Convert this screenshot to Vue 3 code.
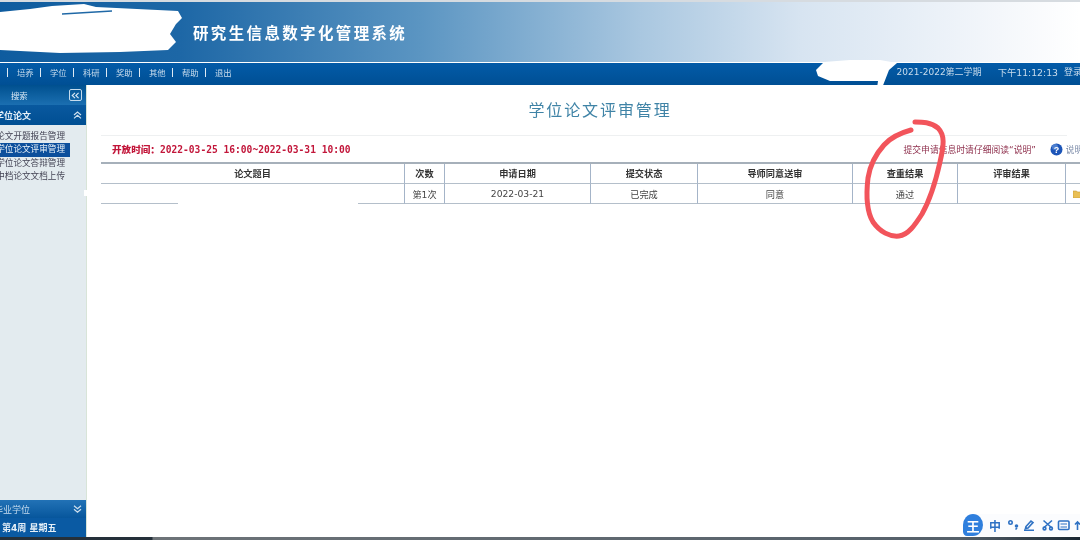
<script setup>
const navItems = ['培养', '学位', '科研', '奖助', '其他', '帮助', '退出'];
const menuItems = [
  { label: '论文开题报告管理', active: false },
  { label: '学位论文评审管理', active: true },
  { label: '学位论文答辩管理', active: false },
  { label: '中档论文文档上传', active: false }
];
const headers = ['论文题目', '次数', '申请日期', '提交状态', '导师同意送审', '查重结果', '评审结果', ''];
const cells = ['', '第1次', '2022-03-21', '已完成', '同意', '通过', ''];
</script>

<template>
  <div class="page">
    <div class="top-line"></div>
    <header class="banner">
      <span class="system-name">研究生信息数字化管理系统</span>
    </header>
    <nav class="nav">
      <div class="nav-links">
        <template v-for="item in navItems" :key="item">
          <i class="nav-sep"></i>
          <a class="nav-link">{{ item }}</a>
        </template>
      </div>
      <div class="nav-info">
        <span class="term">2021-2022第二学期</span>
        <span class="clock">下午11:12:13</span>
        <span class="login">登录用户</span>
      </div>
    </nav>

    <div class="body">
      <aside class="sidebar">
        <div class="search">
          <span class="search-label">搜索</span>
          <span class="collapse-btn">
            <svg width="9" height="7" viewBox="0 0 9 7" fill="none" stroke="#dbe9f5" stroke-width="1.1">
              <path d="M4 .8 1.2 3.5 4 6.2M7.6 .8 4.8 3.5 7.6 6.2" />
            </svg>
          </span>
        </div>
        <div class="section-head">
          <span class="section-title">学位论文</span>
          <svg width="9" height="8" viewBox="0 0 9 8" fill="none" stroke="#cfe0ee" stroke-width="1.2">
            <path d="M1 4 4.5 1 8 4M1 7.4 4.5 4.4 8 7.4" />
          </svg>
        </div>
        <ul class="menu">
          <li v-for="item in menuItems" :key="item.label" :class="['menu-item', { active: item.active }]">
            <span>{{ item.label }}</span>
          </li>
        </ul>
        <div class="section-head lower">
          <span class="section-title light">毕业学位</span>
          <svg width="9" height="8" viewBox="0 0 9 8" fill="none" stroke="#cfe0ee" stroke-width="1.2">
            <path d="M1 .8 4.5 3.8 8 .8M1 4.2 4.5 7.2 8 4.2" />
          </svg>
        </div>
        <div class="week">第4周 星期五</div>
      </aside>

      <main class="main">
        <h1 class="title">学位论文评审管理</h1>
        <div class="toolbar">
          <span class="open-time"><b>开放时间：</b>2022-03-25 16:00~2022-03-31 10:00</span>
          <span class="notice">提交申请信息时请仔细阅读“说明”</span>
          <svg class="help" width="13" height="13" viewBox="0 0 13 13">
            <circle cx="6.5" cy="6.5" r="6" fill="#1c55b8" />
            <circle cx="5" cy="4" r="3" fill="#6d9be0" opacity=".6" />
            <text x="6.5" y="9.8" text-anchor="middle" font-size="9" font-weight="700" font-family="Liberation Sans, sans-serif" fill="#fff">?</text>
          </svg>
          <span class="help-text">说明</span>
        </div>
        <div class="table">
          <div v-for="(h, i) in headers" :key="'h' + i" class="cell head">{{ h }}</div>
          <div v-for="(c, i) in cells" :key="'c' + i" class="cell">{{ c }}</div>
          <div class="cell">
            <svg class="folder" width="9" height="8" viewBox="0 0 9 8">
              <path d="M0 1h3.5l1 1H9v6H0z" fill="#e9bf55" stroke="#c79a35" stroke-width=".6" />
            </svg>
          </div>
        </div>
      </main>
    </div>
    <div class="bottom-line"></div>

    <!-- hand-drawn marks painted over the screenshot -->
    <svg class="marks" width="1080" height="540" viewBox="0 0 1080 540" fill="none">
      <path fill="#fff" d="M0 12 30 9 52 6 84 4 96 7 178 11 182 18 176 24 170 34 176 42 168 50 120 52 60 53 0 50z" />
      <path stroke="#1f68a6" stroke-width="1.5" d="M62 14 112 11" />
      <path fill="#fff" d="M816 70 824 62 850 60 880 60 897 63 889 70 882 88 877 88 878 81 830 81 818 76z" />
      <path fill="#fff" d="M102 184 207 184 207 186 178 186 178 197 358 197 358 206 178 206 178 201 102 201z" />
      <path fill="#fff" d="M84 190h5v6h-5z" />
      <path stroke="#f2545b" stroke-width="5" stroke-linecap="round" stroke-linejoin="round"
        d="M911 130C900 133 891 137 884 145 875 155 870 165 868 178 866 195 867 212 873 222 880 232 890 237 899 236 908 235 915 225 922 214 931 198 936 180 940 162 944 145 945 135 938 128 931 122 922 122 915 122" />
    </svg>

    <div class="ime">
      <span class="ime-logo">王</span>
      <span class="ime-cn">中</span>
      <svg width="74" height="12" viewBox="0 0 74 12" fill="none" stroke="#2f72c4" stroke-width="1.6">
        <circle cx="3.500" cy="3.500" r="1.700" />
        <circle cx="9.500" cy="7" r="1" fill="#2f72c4" />
        <path d="M8.500 10.500 10 9" />
        <path d="M19 7.500 24 2 26 3.500 21 9 18.500 9.500zM17 11.400H27" />
        <path d="M36.500 1.500 45 9M45 1.500 36.500 9" />
        <circle cx="37.500" cy="9.500" r="1.400" />
        <circle cx="44" cy="9.500" r="1.400" />
        <rect x="51.500" y="2" width="10.500" height="8.500" rx="1" />
        <path d="M53.500 5h6.500M53.500 8h6.500" stroke-width="1" />
        <path d="M70.500 11V3M68 5.500 70.500 3 73 5.500" />
      </svg>
    </div>
  </div>
</template>

<style scoped>
.page {
  position: relative;
  display: flex;
  flex-direction: column;
  width: 1080px;
  height: 540px;
  overflow: hidden;
  background: #fff;
  font-family: "DejaVu Sans", "Noto Sans CJK SC", sans-serif;
  font-size: 9px;
  color: #333;
  filter: blur(0.35px);
}

.top-line {
  height: 2px;
  background: #d6dbe0;
}

.banner {
  display: flex;
  align-items: center;
  height: 60px;
  padding-left: 193px;
  box-sizing: border-box;
  background: linear-gradient(90deg, #0f5c9f 0, #1d67a6 180px, #5b95c2 420px, #a9c7e0 640px, #d7e4f1 800px, #f4f7fb 1000px, #fff 1080px);
}

.system-name {
  font-family: "Noto Sans CJK SC", serif;
  font-size: 15.5px;
  font-weight: 700;
  letter-spacing: 2.35px;
  color: #fff;
}

.nav {
  display: flex;
  justify-content: space-between;
  align-items: center;
  height: 22px;
  padding-bottom: 4px;
  box-sizing: border-box;
  margin-top: 1px;
  background: linear-gradient(180deg, #035ba8, #004f94);
  color: #c9dcec;
}

.nav-links {
  display: flex;
  align-items: center;
  padding-left: 7px;
}

.nav-sep {
  width: 1px;
  height: 9px;
  margin-right: 9px;
  background: #dfeaf3;
}

.nav-link {
  width: 23px;
  font-size: 8.4px;
}

.nav-info {
  display: flex;
  gap: 16px;
  margin-right: -20px;
  white-space: nowrap;
}

.term {
  font-size: 9px;
}

.clock {
  font-size: 9.3px;
}

.login {
  margin-left: -10px;
  font-size: 9px;
}

.body {
  display: flex;
  flex: 1;
  min-height: 0;
}

.sidebar {
  display: flex;
  flex-direction: column;
  flex: none;
  width: 86px;
  border-right: 1px solid #d8e4d8;
  background: #e3ebef;
}

.search {
  display: flex;
  align-items: center;
  height: 20px;
  padding: 0 4px 0 11px;
  background: linear-gradient(180deg, #00508f, #1b6fb1);
  color: #dbe9f5;
  font-size: 8.4px;
}

.search-label {
  flex: 1;
}

.collapse-btn {
  display: flex;
  align-items: center;
  justify-content: center;
  width: 11px;
  height: 10px;
  border: 1px solid #c6dcee;
  border-radius: 2px;
}

.section-head {
  display: flex;
  align-items: center;
  justify-content: flex-end;
  height: 20px;
  padding-right: 4px;
  background: linear-gradient(180deg, #09599f, #004f93);
}

.section-head.lower {
  height: 18px;
  background: linear-gradient(180deg, #2272b6, #07569c);
}

.section-title {
  display: block;
  margin-right: auto;
  margin-left: -5px;
  font-size: 9px;
  font-weight: 700;
  color: #e6f0f8;
  white-space: nowrap;
}

.section-title.light {
  font-weight: 400;
  color: #c6dcee;
  margin-left: -6px;
}

.menu {
  flex: 1;
  margin: 0;
  padding: 5px 0 0;
  list-style: none;
}

.menu-item {
  display: flex;
  justify-content: flex-end;
  width: 70px;
  height: 13.3px;
  padding-right: 5px;
  box-sizing: border-box;
  overflow: hidden;
  white-space: nowrap;
  font-size: 8.6px;
  line-height: 13px;
  color: #445;
}

.menu-item.active {
  background: #0c4f9c;
  color: #e8f1f8;
}

.week {
  display: flex;
  align-items: center;
  height: 19px;
  padding-left: 2px;
  background: #0a5aa3;
  color: #e6f0f8;
  font-size: 9px;
  font-weight: 700;
}

.main {
  flex: 1;
  min-width: 0;
  padding-left: 14px;
  overflow: hidden;
}

.title {
  margin: 14px 0 0;
  width: 998px;
  font-family: "Noto Sans CJK SC", serif;
  font-size: 16px;
  font-weight: 400;
  line-height: 20px;
  letter-spacing: 1.9px;
  text-align: center;
  color: #3f83a6;
}

.toolbar {
  display: flex;
  align-items: center;
  height: 27px;
  margin-top: 16px;
  width: 966px;
  padding: 0 0 0 11px;
  box-sizing: border-box;
  border-top: 1px solid #eef0f1;
  white-space: nowrap;
}

.open-time {
  flex: 1;
  font-family: "DejaVu Sans Mono", "Noto Sans CJK SC", monospace;
  font-size: 9.6px;
  font-weight: 700;
  color: #c2163a;
}

.open-time b {
  font-family: "Noto Sans CJK SC", sans-serif;
}

.notice {
  font-size: 8.8px;
  color: #8e2f4c;
}

.help {
  flex: none;
  margin-left: 14px;
}

.help-text {
  margin-left: 3px;
  margin-right: -16px;
  font-size: 8.6px;
  color: #7a8aa8;
}

.table {
  display: grid;
  grid-template-columns: 304px 40px 146px 107px 155px 105px 108px 40px;
  grid-auto-rows: 20px;
  width: 1005px;
  border-top: 2px solid #a6b0ba;
  margin-top: 0;
}

.cell {
  display: flex;
  align-items: center;
  justify-content: center;
  box-sizing: border-box;
  border-right: 1px solid #a4b4c8;
  border-bottom: 1px solid #b4bfca;
  font-size: 9.2px;
  color: #444;
  white-space: nowrap;
}

.cell:nth-child(8) {
  border-right: 0;
}

.cell:last-child {
  border-right: 0;
  justify-content: flex-start;
  padding-left: 7px;
}

.head {
  padding-bottom: 2px;
  font-weight: 700;
  color: #333;
}

.marks {
  position: absolute;
  top: 0;
  left: 0;
  pointer-events: none;
}

.ime {
  position: absolute;
  left: 963px;
  bottom: 4px;
  display: flex;
  align-items: center;
  width: 130px;
  height: 22px;
  background: #fbfcfe;
  border-radius: 11px;
  gap: 6px;
}

.ime-logo {
  display: flex;
  align-items: center;
  justify-content: center;
  width: 20px;
  height: 22px;
  border-radius: 50% 50% 50% 20%;
  background: #2f7fdd;
  color: #fff;
  font-size: 13px;
  font-weight: 700;
}

.ime-cn {
  font-size: 12px;
  font-weight: 700;
  color: #2f72c4;
}

.bottom-line {
  height: 3px;
  background: linear-gradient(90deg, #25303a 0, #25303a 152px, #6d7378 153px, #55606a 960px, #1a2833 1080px);
}
</style>

<style>
html, body {
  margin: 0;
  overflow: hidden;
}
</style>
